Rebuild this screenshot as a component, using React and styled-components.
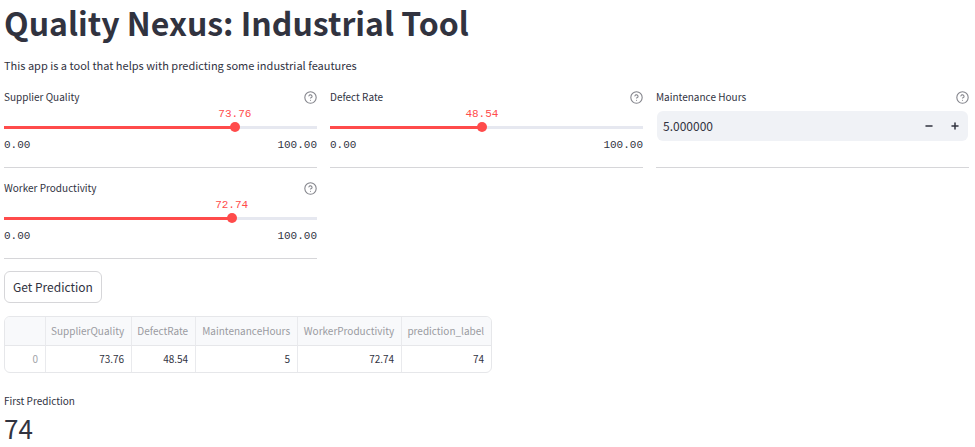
import React, { useId, useState } from "react";
import styled, { createGlobalStyle } from "styled-components";

const GlobalStyle = createGlobalStyle`
  *, *::before, *::after { box-sizing: border-box; }
  body {
    margin: 0;
    background: #ffffff;
    color: #31333f;
    font-family: "Noto Sans CJK SC", "Noto Sans", sans-serif;
    font-size: 12px;
  }
  button, input { font: inherit; color: inherit; }
`;

const Page = styled.main`
  padding: 0 6px 0 4px;
`;

const Title = styled.h1`
  margin: 0;
  font-size: 32px;
  font-weight: 700;
  line-height: 44px;
`;

const Intro = styled.p`
  margin: 11px 0 13px;
  font-size: 11px;
  line-height: 20px;
`;

const FieldGrid = styled.div`
  display: grid;
  grid-template-columns: repeat(3, minmax(0, 1fr));
  gap: 11px 13px;
`;

const FieldBox = styled.section`
  display: flex;
  flex-direction: column;
  border-bottom: 1px solid #d6d6d9;
  padding-bottom: 14px;
`;

const LabelRow = styled.div`
  display: flex;
  align-items: center;
  justify-content: space-between;
  height: 18px;
`;

const FieldLabel = styled.label`
  font-size: 10px;
  line-height: 18px;
`;

const HelpButton = styled.button`
  display: flex;
  padding: 0;
  border: 0;
  background: none;
  color: #83848b;
`;

const ValueLine = styled.div`
  position: relative;
  height: 15px;
`;

const ThumbValue = styled.output`
  position: absolute;
  top: 0;
  transform: translateX(-50%);
  color: #ff4b4b;
  font-family: "Liberation Mono", monospace;
  font-size: 11px;
  line-height: 16px;
`;

const Track = styled.div`
  display: flex;
  align-items: center;
  height: 12px;
  background: linear-gradient(#ff4b4b, #ff4b4b) left center / ${(p) => p.$percent}% 3px no-repeat,
    linear-gradient(#e6e8f0, #e6e8f0) left center / 100% 3px no-repeat;
`;

const RangeInput = styled.input`
  appearance: none;
  flex: 1;
  min-width: 0;
  height: 12px;
  margin: 0 -5px;
  background: transparent;
  cursor: pointer;

  &::-webkit-slider-thumb {
    appearance: none;
    width: 10px;
    height: 10px;
    border: 0;
    border-radius: 50%;
    background: #ff4b4b;
  }
`;

const Limits = styled.div`
  display: flex;
  justify-content: space-between;
  margin-top: 4px;
  font-family: "Liberation Mono", monospace;
  font-size: 11px;
  line-height: 16px;
`;

const NumberBox = styled.div`
  display: flex;
  align-items: center;
  height: 30px;
  margin: 5px 1px 0;
  border-radius: 6px;
  background: #f0f2f6;
  overflow: hidden;
`;

const NumberText = styled.input`
  flex: 1;
  min-width: 0;
  padding: 0 6px;
  border: 0;
  background: transparent;
  font-size: 12px;
  line-height: 20px;
`;

const StepButton = styled.button`
  display: flex;
  align-items: center;
  justify-content: center;
  width: 26px;
  height: 30px;
  padding: 0;
  border: 0;
  background: transparent;
`;

const PredictButton = styled.button`
  display: block;
  margin: 12px 0 13px;
  padding: 5px 8px;
  border: 1px solid #d6d6d9;
  border-radius: 6px;
  background: #ffffff;
  font-size: 12px;
  line-height: 20px;
`;

const TableFrame = styled.div`
  width: fit-content;
  border: 1px solid #e6e7ea;
  border-radius: 6px;
  overflow: hidden;
`;

const DataTable = styled.table`
  border-collapse: separate;
  border-spacing: 0;
  font-size: 10px;
  line-height: 16px;
`;

const Column = styled.col`
  width: ${(p) => p.$width}px;
`;

const Cell = styled.td`
  height: 26px;
  padding: 0 7px 0 5px;
  text-align: right;
  border-left: ${(p) => (p.$first ? "0" : "1px solid #e9eaed")};
`;

const HeadCell = styled(Cell)`
  height: 29px;
  border-bottom: 1px solid #e6e7ea;
  background: #f8f9fb;
  color: #9a9ba1;
  font-weight: 400;
`;

const IndexCell = styled(Cell)`
  color: #a3a4a9;
  font-weight: 400;
`;

const Metric = styled.dl`
  margin: 19px 0 0;
`;

const MetricLabel = styled.dt`
  font-size: 10px;
  line-height: 18px;
`;

const MetricValue = styled.dd`
  margin: 0;
  font-size: 26px;
  line-height: 36px;
`;

function Help({ topic }) {
  return (
    <HelpButton type="button" aria-label={`Help: ${topic}`}>
      <svg width="13" height="13" viewBox="0 0 24 24" fill="none" stroke="currentColor" strokeWidth="2" strokeLinecap="round" strokeLinejoin="round">
        <circle cx="12" cy="12" r="10.5" />
        <path d="M9.1 9a3 3 0 0 1 5.8 1c0 2-3 3-3 3" />
        <path d="M12 17h.01" />
      </svg>
    </HelpButton>
  );
}

function Field({ id, label, children }) {
  return (
    <FieldBox>
      <LabelRow>
        <FieldLabel htmlFor={id}>{label}</FieldLabel>
        <Help topic={label} />
      </LabelRow>
      {children}
    </FieldBox>
  );
}

function SliderField({ label, value, onChange }) {
  const id = useId();
  return (
    <Field id={id} label={label}>
      <ValueLine>
        <ThumbValue htmlFor={id} style={{ left: `${value}%` }}>{value.toFixed(2)}</ThumbValue>
      </ValueLine>
      <Track $percent={value}>
        <RangeInput id={id} type="range" min="0" max="100" step="0.01" value={value} onChange={(e) => onChange(Number(e.target.value))} />
      </Track>
      <Limits>
        <span>0.00</span>
        <span>100.00</span>
      </Limits>
    </Field>
  );
}

function NumberField({ label, value, onChange }) {
  const id = useId();
  return (
    <Field id={id} label={label}>
      <NumberBox>
        <NumberText id={id} inputMode="decimal" value={value.toFixed(6)} onChange={(e) => onChange(Number(e.target.value) || 0)} />
        <StepButton type="button" aria-label="Decrease" onClick={() => onChange(value - 1)}>
          <svg width="8" height="8" viewBox="0 0 8 8"><path d="M1 4h6" stroke="currentColor" strokeWidth="1.5" strokeLinecap="round" /></svg>
        </StepButton>
        <StepButton type="button" aria-label="Increase" onClick={() => onChange(value + 1)}>
          <svg width="8" height="8" viewBox="0 0 8 8"><path d="M1 4h6M4 1v6" stroke="currentColor" strokeWidth="1.5" strokeLinecap="round" /></svg>
        </StepButton>
      </NumberBox>
    </Field>
  );
}

const columns = [
  { name: "SupplierQuality", width: 86 },
  { name: "DefectRate", width: 64 },
  { name: "MaintenanceHours", width: 102 },
  { name: "WorkerProductivity", width: 104 },
  { name: "prediction_label", width: 90 },
];
const rows = [["73.76", "48.54", "5", "72.74", "74"]];

export default function App() {
  const [supplier, setSupplier] = useState(73.76);
  const [defect, setDefect] = useState(48.54);
  const [hours, setHours] = useState(5);
  const [worker, setWorker] = useState(72.74);

  return (
    <>
      <GlobalStyle />
      <Page>
        <Title>Quality Nexus: Industrial Tool</Title>
        <Intro>This app is a tool that helps with predicting some industrial feautures</Intro>
        <FieldGrid>
          <SliderField label="Supplier Quality" value={supplier} onChange={setSupplier} />
          <SliderField label="Defect Rate" value={defect} onChange={setDefect} />
          <NumberField label="Maintenance Hours" value={hours} onChange={setHours} />
          <SliderField label="Worker Productivity" value={worker} onChange={setWorker} />
        </FieldGrid>
        <PredictButton type="button">Get Prediction</PredictButton>
        <TableFrame>
          <DataTable>
            <colgroup>
              <Column $width={40} />
              {columns.map((column) => (
                <Column key={column.name} $width={column.width} />
              ))}
            </colgroup>
            <thead>
              <tr>
                <HeadCell $first />
                {columns.map((column) => (
                  <HeadCell as="th" scope="col" key={column.name}>{column.name}</HeadCell>
                ))}
              </tr>
            </thead>
            <tbody>
              {rows.map((row, index) => (
                <tr key={index}>
                  <IndexCell as="th" scope="row" $first>{index}</IndexCell>
                  {row.map((value, i) => (
                    <Cell key={columns[i].name}>{value}</Cell>
                  ))}
                </tr>
              ))}
            </tbody>
          </DataTable>
        </TableFrame>
        <Metric>
          <MetricLabel>First Prediction</MetricLabel>
          <MetricValue>{rows[0][4]}</MetricValue>
        </Metric>
      </Page>
    </>
  );
}
